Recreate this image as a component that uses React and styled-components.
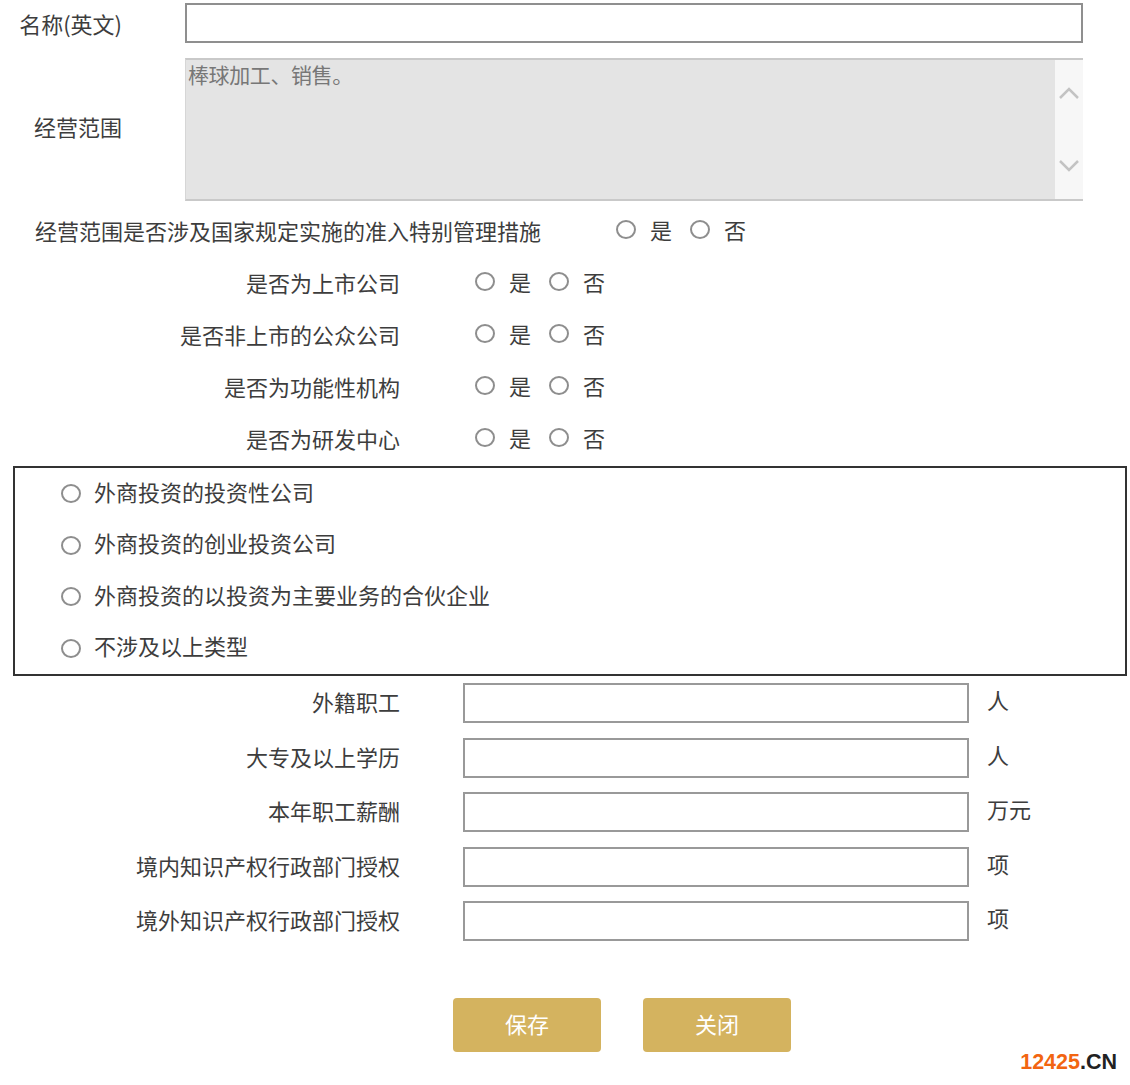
import React from "react";
import styled, { createGlobalStyle } from "styled-components";

const Global = createGlobalStyle`
  html, body { margin: 0; padding: 0; background: #fff; }
  body {
    font-family: "Noto Sans CJK SC", "Microsoft YaHei", sans-serif;
    color: #3d3d3d;
    font-size: 22px;
  }
  * { box-sizing: border-box; }
`;

const Page = styled.div`
  width: 1130px;
  height: 1085px;
  padding-top: 3px;
  display: flex;
  flex-direction: column;
`;

const TopRow = styled.div`
  display: flex;
  align-items: center;
  height: ${(p) => p.$h}px;
  margin-bottom: ${(p) => p.$mb || 0}px;
`;

const TopLabel = styled.div`
  width: 122px;
  text-align: right;
  line-height: 1;
  flex-shrink: 0;
  margin-right: 63px;
  position: relative;
  top: ${(p) => p.$shift || 0}px;
`;

const NameInput = styled.div`
  width: 898px;
  height: 40px;
  border: 2px solid #8f8f8f;
  background: #fff;
`;

const Area = styled.div`
  width: 898px;
  height: 143px;
  display: flex;
  background: #e4e4e4;
  border-top: 2px solid #c9c9c9;
  border-bottom: 2px solid #c9c9c9;
  border-left: 1px solid #d6d6d6;
`;

const AreaText = styled.div`
  flex: 1;
  font-size: 21px;
  color: #777;
  line-height: 1;
  padding: 4px 0 0 2px;
  letter-spacing: -0.4px;
`;

const Scroll = styled.div`
  width: 28px;
  background: #f7f7f7;
  display: flex;
  flex-direction: column;
  align-items: center;
  justify-content: space-between;
  padding: 26px 0 26px;
`;

const Chevron = ({ up }) => (
  <svg width="22" height="14" viewBox="0 0 22 14">
    <path
      d={up ? "M2 12 L11 3 L20 12" : "M2 2 L11 11 L20 2"}
      fill="none"
      stroke="#c3c3c3"
      strokeWidth="2.5"
    />
  </svg>
);

const QRow = styled.div`
  display: flex;
  align-items: center;
  height: 52px;
`;

const QLabel = styled.div`
  line-height: 1;
  flex-shrink: 0;
  position: relative;
  top: -2px;
  ${(p) =>
    p.$wide
      ? `margin-left: 35px; margin-right: 75px;`
      : `width: 400px; text-align: right; margin-right: 75px;`}
`;

const Choice = styled.label`
  display: inline-flex;
  align-items: center;
  margin-right: 18px;
  line-height: 1;
  position: relative;
  top: -3px;
`;

const Circle = styled.span`
  display: inline-block;
  width: 20px;
  height: 19px;
  border: 2px solid #8e8e8e;
  border-radius: 50%;
  margin-right: 14px;
  background: #fff;
  flex-shrink: 0;
`;

const TypeBox = styled.div`
  margin: 0 3px 0 13px;
  border: 2px solid #333;
  padding: 0 0 0 46px;
  display: flex;
  flex-direction: column;
`;

const TypeRow = styled.label`
  display: flex;
  align-items: center;
  height: 51.5px;
  line-height: 1;
  padding-bottom: 6px;
`;

const TypeCircle = styled(Circle)`
  margin-right: 13px;
  position: relative;
  top: 3px;
`;

const NumList = styled.div`
  display: flex;
  flex-direction: column;
  gap: 14.5px;
  margin-top: 7px;
`;

const NumRow = styled.div`
  display: flex;
  align-items: center;
  height: 40px;
`;

const NumLabel = styled.div`
  width: 400px;
  text-align: right;
  line-height: 1;
  margin-right: 63px;
  flex-shrink: 0;
  position: relative;
  top: -2px;
`;

const NumInput = styled.div`
  width: 506px;
  height: 40px;
  border: 2px solid #999;
  background: #fff;
`;

const Unit = styled.div`
  margin-left: 18px;
  line-height: 1;
  position: relative;
  top: -4px;
`;

const Buttons = styled.div`
  display: flex;
  gap: 42px;
  padding-left: 453px;
  margin-top: 57px;
`;

const Btn = styled.button`
  width: 148px;
  height: 54px;
  border: none;
  border-radius: 4px;
  background: #d4b35f;
  color: #fff;
  font-family: "Noto Sans CJK SC", "Microsoft YaHei", sans-serif;
  font-size: 22px;
  cursor: pointer;
  padding: 0 0 4px;
`;

const Mark = styled.div`
  align-self: flex-end;
  margin-right: 13px;
  font-family: "Liberation Sans", Arial, sans-serif;
  font-weight: bold;
  font-size: 21.5px;
  line-height: 1;
  color: #222;
`;

const Orange = styled.span`
  color: #f26511;
`;

const yn = ["是", "否"];

const questions = ["是否为上市公司", "是否非上市的公众公司", "是否为功能性机构", "是否为研发中心"];

const types = [
  "外商投资的投资性公司",
  "外商投资的创业投资公司",
  "外商投资的以投资为主要业务的合伙企业",
  "不涉及以上类型",
];

const nums = [
  ["外籍职工", "人"],
  ["大专及以上学历", "人"],
  ["本年职工薪酬", "万元"],
  ["境内知识产权行政部门授权", "项"],
  ["境外知识产权行政部门授权", "项"],
];

const YesNo = () => (
  <>
    {yn.map((t) => (
      <Choice key={t}>
        <Circle />
        {t}
      </Choice>
    ))}
  </>
);

export default function App() {
  return (
    <>
      <Global />
      <Page>
        <TopRow $h={40} $mb={14}>
          <TopLabel>名称(英文)</TopLabel>
          <NameInput />
        </TopRow>
        <TopRow $h={145} $mb={4}>
          <TopLabel $shift={-4}>经营范围</TopLabel>
          <Area>
            <AreaText>棒球加工、销售。</AreaText>
            <Scroll>
              <Chevron up />
              <Chevron />
            </Scroll>
          </Area>
        </TopRow>
        <QRow>
          <QLabel $wide>经营范围是否涉及国家规定实施的准入特别管理措施</QLabel>
          <YesNo />
        </QRow>
        {questions.map((q) => (
          <QRow key={q}>
            <QLabel>{q}</QLabel>
            <YesNo />
          </QRow>
        ))}
        <TypeBox>
          {types.map((t) => (
            <TypeRow key={t}>
              <TypeCircle />
              {t}
            </TypeRow>
          ))}
        </TypeBox>
        <NumList>
          {nums.map(([l, u]) => (
            <NumRow key={l}>
              <NumLabel>{l}</NumLabel>
              <NumInput />
              <Unit>{u}</Unit>
            </NumRow>
          ))}
        </NumList>
        <Buttons>
          <Btn>保存</Btn>
          <Btn>关闭</Btn>
        </Buttons>
        <Mark>
          <Orange>12425</Orange>.CN
        </Mark>
      </Page>
    </>
  );
}
